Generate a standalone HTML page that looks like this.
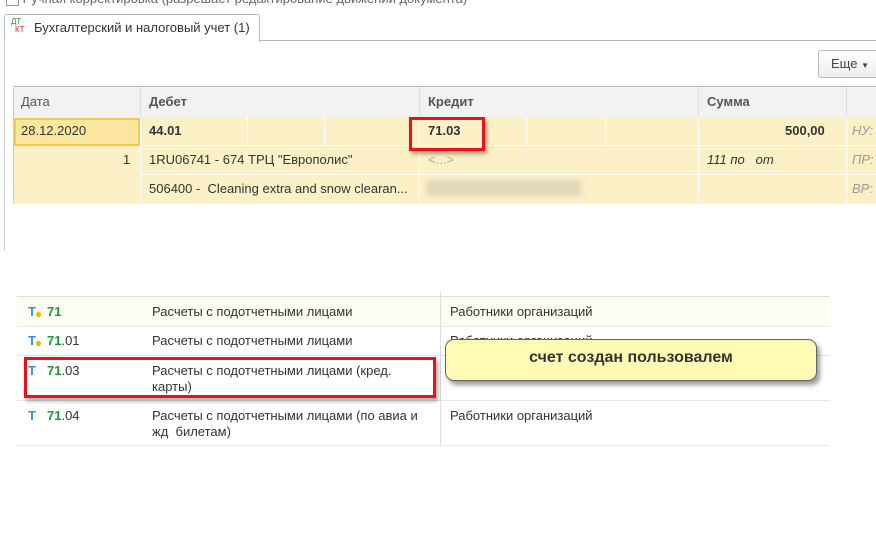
<!DOCTYPE html>
<html><head><meta charset="utf-8"><style>
body{margin:0;width:876px;height:542px;background:#fff;position:relative;overflow:hidden;font-family:"Liberation Sans",sans-serif;font-size:13px;color:#333}
.a{position:absolute}
.hd{color:#555;font-weight:bold}
.y{background:#fcf1c6}
.t{white-space:nowrap}
</style></head><body>
<div class="a t" style="left:6px;top:-9px;color:#666;font-size:13px"><span style="display:inline-block;width:11px;height:11px;border:1px solid #999;vertical-align:middle"></span> Ручная корректировка (разрешает редактирование движений документа)</div>
<!-- tab -->
<div class="a" style="left:259px;top:40px;width:617px;border-top:1px solid #bbb"></div>
<div class="a" style="left:4px;top:14px;width:254px;height:27px;border:1px solid #bbb;border-bottom:none;border-radius:3px 3px 0 0;background:#fff"></div>
<div class="a" style="left:4px;top:41px;height:210px;border-left:1px solid #ccc"></div>
<div class="a t" style="left:11px;top:18px;font-size:8px;line-height:8px"><span style="color:#2a8a2a">ДТ</span><br><span style="color:#d22;margin-left:4px">КТ</span></div>
<div class="a t" style="left:34px;top:20px;font-size:13px;color:#333">Бухгалтерский и налоговый учет (1)</div>
<div class="a" style="left:818px;top:50px;width:60px;height:26px;border:1px solid #bbb;border-radius:3px;background:linear-gradient(#fff,#eee)"></div>
<div class="a t" style="left:831px;top:56px;font-size:13px;color:#444">Еще <span style="font-size:8px">▼</span></div>
<!-- upper table -->
<div class="a" style="left:13px;top:86px;width:863px;height:30px;background:#f2f2f2;border-top:1px solid #bbb;border-bottom:1px solid #ddd"></div>
<div class="a" style="left:13px;top:86px;height:118px;border-left:1px solid #ccc"></div>
<div class="a" style="left:140px;top:87px;height:30px;border-left:1px solid #ddd"></div>
<div class="a" style="left:419px;top:87px;height:30px;border-left:1px solid #ddd"></div>
<div class="a" style="left:698px;top:87px;height:30px;border-left:1px solid #ddd"></div>
<div class="a" style="left:846px;top:87px;height:30px;border-left:1px solid #ddd"></div>
<div class="a t" style="left:21px;top:94px;color:#555">Дата</div>
<div class="a t hd" style="left:149px;top:94px">Дебет</div>
<div class="a t hd" style="left:428px;top:94px">Кредит</div>
<div class="a t hd" style="left:707px;top:94px">Сумма</div>
<div class="a y" style="left:14px;top:117px;width:862px;height:86px"></div>
<div class="a" style="left:14px;top:145px;width:862px;border-top:1px solid #fff"></div>
<div class="a" style="left:140px;top:174px;width:736px;border-top:1px solid #fff"></div>
<div class="a" style="left:14px;top:203px;width:862px;border-top:1px solid #eee"></div>
<div class="a" style="left:140px;top:117px;height:86px;border-left:1px solid #fff"></div>
<div class="a" style="left:247px;top:117px;height:28px;border-left:1px solid #fff"></div>
<div class="a" style="left:324px;top:117px;height:28px;border-left:1px solid #fff"></div>
<div class="a" style="left:419px;top:117px;height:86px;border-left:1px solid #fff"></div>
<div class="a" style="left:526px;top:117px;height:28px;border-left:1px solid #fff"></div>
<div class="a" style="left:605px;top:117px;height:28px;border-left:1px solid #fff"></div>
<div class="a" style="left:698px;top:117px;height:86px;border-left:1px solid #fff"></div>
<div class="a" style="left:846px;top:117px;height:86px;border-left:1px solid #fff"></div>
<div class="a" style="left:14px;top:118px;width:122px;height:24px;border:2px solid #f2c94c;background:#fbe6a0"></div>
<div class="a t" style="left:21px;top:123px">28.12.2020</div>
<div class="a t" style="left:149px;top:123px;font-weight:bold">44.01</div>
<div class="a t" style="left:428px;top:123px;font-weight:bold">71.03</div>
<div class="a t" style="left:785px;top:123px;font-weight:bold">500,00</div>
<div class="a t" style="left:852px;top:123px;color:#999;font-style:italic">НУ:</div>
<div class="a t" style="left:123px;top:152px">1</div>
<div class="a t" style="left:149px;top:152px">1RU06741 - 674 ТРЦ "Европолис"</div>
<div class="a t" style="left:428px;top:152px;color:#aaa">&lt;...&gt;</div>
<div class="a t" style="left:707px;top:152px;font-style:italic">111 по &nbsp; от</div>
<div class="a t" style="left:852px;top:152px;color:#999;font-style:italic">ПР:</div>
<div class="a t" style="left:149px;top:181px">506400 - &nbsp;Cleaning extra and snow clearan...</div>
<div class="a" style="left:426px;top:180px;width:155px;height:16px;background:#e0d6b8;filter:blur(3px)"></div>
<div class="a t" style="left:852px;top:181px;color:#999;font-style:italic">ВР:</div>
<div class="a" style="left:409px;top:117px;width:70px;height:28px;border:3px solid #e8121a;box-shadow:2px 3px 4px rgba(0,0,0,.35)"></div>
<!-- lower table -->
<div class="a" style="left:17px;top:296px;width:813px;border-top:1px solid #ddd"></div>
<div class="a" style="left:17px;top:297px;width:813px;height:29px;background:#fdfdf3"></div>
<div class="a" style="left:17px;top:326px;width:813px;border-top:1px solid #e6e6e6"></div>
<div class="a" style="left:17px;top:355px;width:813px;border-top:1px solid #e6e6e6"></div>
<div class="a" style="left:17px;top:400px;width:813px;border-top:1px solid #e6e6e6"></div>
<div class="a" style="left:17px;top:445px;width:813px;border-top:1px solid #e6e6e6"></div>
<div class="a" style="left:440px;top:292px;height:153px;border-left:1px solid #ddd"></div>
<div class="a t" style="left:28px;top:304px;color:#3b8fd0;font-weight:bold;font-size:13px">T<span style="display:inline-block;width:5px;height:5px;border-radius:50%;background:#e6b800;vertical-align:-1px"></span></div>
<div class="a t" style="left:47px;top:304px;color:#1a9a3a;font-weight:bold">71</div>
<div class="a t" style="left:28px;top:333px;color:#3b8fd0;font-weight:bold;font-size:13px">T<span style="display:inline-block;width:5px;height:5px;border-radius:50%;background:#e6b800;vertical-align:-1px"></span></div>
<div class="a t" style="left:47px;top:333px"><b style="color:#1a9a3a">71</b>.01</div>
<div class="a t" style="left:28px;top:363px;color:#3b8fd0;font-weight:bold;font-size:13px">T</div>
<div class="a t" style="left:47px;top:363px"><b style="color:#1a9a3a">71</b>.03</div>
<div class="a t" style="left:28px;top:408px;color:#3b8fd0;font-weight:bold;font-size:13px">T</div>
<div class="a t" style="left:47px;top:408px"><b style="color:#1a9a3a">71</b>.04</div>
<div class="a t" style="left:152px;top:304px">Расчеты с подотчетными лицами</div>
<div class="a t" style="left:152px;top:333px">Расчеты с подотчетными лицами</div>
<div class="a" style="left:152px;top:363px;line-height:16px">Расчеты с подотчетными лицами (кред.<br>карты)</div>
<div class="a" style="left:152px;top:408px;line-height:16px">Расчеты с подотчетными лицами (по авиа и<br>жд &nbsp;билетам)</div>
<div class="a t" style="left:450px;top:304px">Работники организаций</div>
<div class="a t" style="left:450px;top:333px">Работники организаций</div>
<div class="a t" style="left:450px;top:408px">Работники организаций</div>
<div class="a" style="left:24px;top:357px;width:406px;height:35px;border:3px solid #e8121a;box-shadow:2px 3px 4px rgba(0,0,0,.35)"></div>
<div class="a" style="left:445px;top:339px;width:370px;height:40px;border:1px solid #666;border-radius:9px;background:#fffbb5;box-shadow:3px 4px 5px rgba(0,0,0,.4)"></div>
<div class="a t" style="left:445px;top:349px;width:372px;text-align:center;font-weight:bold;font-size:16px;color:#333">счет создан пользовалем</div>
</body></html>
